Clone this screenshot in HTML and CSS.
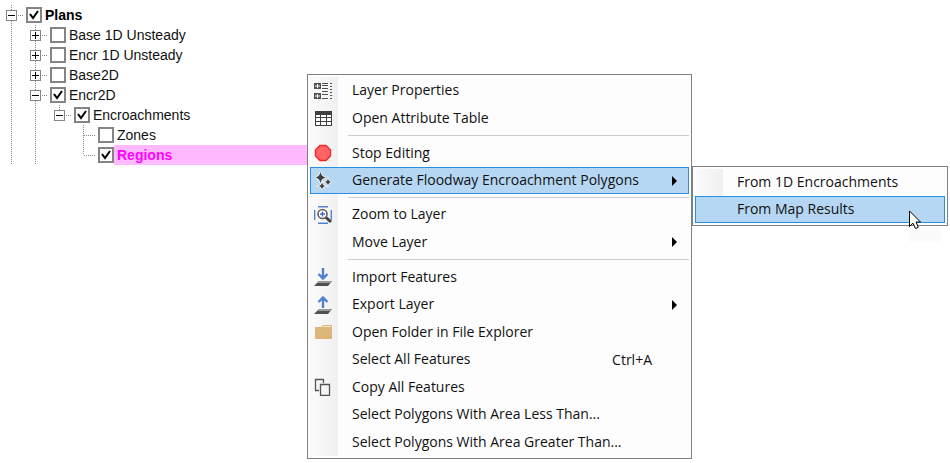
FILE: index.html
```html
<!DOCTYPE html>
<html lang="en">
<head>
    <meta charset="UTF-8">
    <meta name="viewport" content="width=device-width, initial-scale=1.0">
    <title>Plans</title>
    <link rel="stylesheet" href="styles.css">
</head>
<body>
    <!-- Layer Tree -->
    <ul class="tree">
        <li>
            <div class="row"><button class="toggle open" aria-label="Collapse"></button><label class="bold"><input type="checkbox" checked><span>Plans</span></label></div>
            <ul>
                <li><div class="row"><button class="toggle" aria-label="Expand"></button><label><input type="checkbox"><span>Base 1D Unsteady</span></label></div></li>
                <li><div class="row"><button class="toggle" aria-label="Expand"></button><label><input type="checkbox"><span>Encr 1D Unsteady</span></label></div></li>
                <li><div class="row"><button class="toggle" aria-label="Expand"></button><label><input type="checkbox"><span>Base2D</span></label></div></li>
                <li>
                    <div class="row"><button class="toggle open" aria-label="Collapse"></button><label><input type="checkbox" checked><span>Encr2D</span></label></div>
                    <ul class="single">
                        <li>
                            <div class="row"><button class="toggle open" aria-label="Collapse"></button><label><input type="checkbox" checked><span>Encroachments</span></label></div>
                            <ul class="leaves">
                                <li><div class="row leaf"><label><input type="checkbox"><span>Zones</span></label></div></li>
                                <li><div class="row leaf"><label class="bold selected"><input type="checkbox" checked><span>Regions</span></label></div></li>
                            </ul>
                        </li>
                    </ul>
                </li>
            </ul>
        </li>
    </ul>

    <!-- Context Menu -->
    <ul class="menu context">
        <li><button>
            <svg class="icon" viewBox="0 0 18 18"><path fill="#505050" d="M0 1h7v6H0zM0 11h7v6H0zM8 1h6v1H8zM8 3h6v1H8zM8 6h6v1H8zM8 9h6v1H8zM8 12h6v1H8zM8 16h6v1H8zM16 1h2v1h-2zM16 4h2v1h-2zM16 7h2v1h-2zM16 10h2v1h-2zM16 13h2v1h-2zM16 16h2v1h-2z"/><path fill="#fff" d="M3 2h1v1.500h2v1H4V6H3V4.500H1v-1h2zM3 12h1v1.500h2v1H4V16H3v-1.500H1v-1h2z"/></svg>
            <span>Layer Properties</span></button></li>
        <li><button>
            <svg class="icon" viewBox="0 0 18 18"><path fill="#404040" d="M1 2h17v15H1z"/><path fill="#fff" d="M2 6h4v2H2zM7 6h5v2H7zM13 6h4v2h-4zM2 9h4v3H2zM7 9h5v3H7zM13 9h4v3h-4zM2 13h4v3H2zM7 13h5v3H7zM13 13h4v3h-4z"/></svg>
            <span>Open Attribute Table</span></button></li>
        <li class="separator"></li>
        <li><button>
            <svg class="icon" viewBox="0 0 18 18"><path fill="#ff6464" stroke="#f02828" stroke-width="1.400" d="M6 1.500h6l4.500 4.500v6L12 16.500H6L1.500 12V6z"/></svg>
            <span>Stop Editing</span></button></li>
        <li class="active"><button>
            <svg class="icon" viewBox="0 0 18 18"><path fill="#404040" stroke="#e8edf3" stroke-width="2" paint-order="stroke" d="M6.500 0q.9 4.600 5 5.500-4.100.9-5 5.500-.9-4.600-5-5.500 4.100-.9 5-5.500zM14 7q.8 2.400 3 3-2.200.6-3 3-.8-2.400-3-3 2.200-.6 3-3zM8 11q.8 2.400 3 3-2.200.6-3 3-.8-2.400-3-3 2.200-.6 3-3z"/></svg>
            <span>Generate Floodway Encroachment Polygons</span><i class="arrow"></i></button>
            <!-- Submenu -->
            <ul class="menu submenu">
                <li><button><i class="icon"></i><span>From 1D Encroachments</span></button></li>
                <li class="active"><button><i class="icon"></i><span>From Map Results</span></button></li>
            </ul>
        </li>
        <li class="separator"></li>
        <li><button>
            <svg class="icon" viewBox="0 0 18 18"><path stroke="#5282d2" stroke-width="1.400" d="M4 .7h10M4 17.300h10M.7 4v10M17.300 4v10"/><circle cx="8.500" cy="8" r="4.500" fill="#fff" stroke="#606060" stroke-width="1.600"/><path stroke="#404040" stroke-width="3" d="M12 11.500l5 4.500"/><path stroke="#3f70c8" stroke-width="1.400" d="M8.500 5.500v5M6 8h5"/></svg>
            <span>Zoom to Layer</span></button></li>
        <li><button><i class="icon"></i><span>Move Layer</span><i class="arrow"></i></button></li>
        <li class="separator"></li>
        <li><button>
            <svg class="icon" viewBox="0 0 18 18"><path fill="#505050" d="M5 13h13l-4 5H0z"/><path fill="#999" d="M5 13h13l-1.500 2H3z"/><path fill="none" stroke="#4f7fd0" stroke-width="2.400" d="M9 0v10M4.500 6L9 10.500 13.500 6"/></svg>
            <span>Import Features</span></button></li>
        <li><button>
            <svg class="icon" viewBox="0 0 18 18"><path fill="#505050" d="M5 13h13l-4 5H0z"/><path fill="#999" d="M5 13h13l-1.500 2H3z"/><path fill="none" stroke="#4f7fd0" stroke-width="2.400" d="M9 12V2M4.500 6L9 1.500 13.500 6"/></svg>
            <span>Export Layer</span><i class="arrow"></i></button></li>
        <li><button>
            <svg class="icon" viewBox="0 0 18 18"><path fill="#dcb67a" d="M1 4h6l2-2h9v14H1z"/><path fill="#f8efdf" d="M9.500 3H17v1H8.500z"/></svg>
            <span>Open Folder in File Explorer</span></button></li>
        <li><button><i class="icon"></i><span>Select All Features</span><kbd>Ctrl+A</kbd></button></li>
        <li><button>
            <svg class="icon" viewBox="0 0 18 18"><path fill="#f6f6f6" stroke="#555" stroke-width="1.300" d="M5 12.500H1.500v-11h8V5M6.500 6.500h9v11h-9z"/></svg>
            <span>Copy All Features</span></button></li>
        <li><button><i class="icon"></i><span>Select Polygons With Area Less Than...</span></button></li>
        <li><button><i class="icon"></i><span>Select Polygons With Area Greater Than...</span></button></li>
    </ul>

    <!-- Mouse Pointer -->
    <svg class="pointer" viewBox="0 0 32 32"><path fill="#fbfbfb" d="M0 17h32v15H0z"/><path fill="#fff" stroke="#000" d="M.5 1v15.500l3.500-3.300 2.500 5.300 2.800-1.200-2.300-5.300h4.500z"/></svg>
</body>
</html>
```
FILE: styles.css
```css
body {
    margin: 0;
    min-height: 100vh;
    position: relative;
    background-color: #fff;
    color: #111;
    overflow: hidden;
}

ul {
    list-style: none;
    margin: 0;
    padding: 0;
}

button {
    border: none;
    padding: 0;
    background: none;
    color: inherit;
    font: inherit;
    text-align: left;
}

/* Tree */
.tree {
    width: 40%;
    padding: 5px 0 0 6px;
    font-family: 'Liberation Sans', Arial, sans-serif;
    font-size: 14px;
}

/* Dotted guide lines, one per level */
.tree,
.tree ul {
    background-image: repeating-linear-gradient(#888 0 1px, transparent 1px 2px);
    background-repeat: no-repeat;
    background-size: 1px 100%;
    background-position: 5px 0;
}

.tree {
    background-position: 11px 5px;
}

.tree ul {
    margin-left: 24px;
}

.tree ul.single {
    background-size: 1px 10px;
}

.tree ul.leaves {
    background-size: 1px calc(100% - 10px);
}

.row {
    display: flex;
    align-items: center;
    height: 20px;
    background: repeating-linear-gradient(90deg, #888 0 1px, transparent 1px 2px) 12px 10px / 6px 1px no-repeat;
}

.row.leaf {
    padding-left: 20px;
    background-position: 6px 10px;
    background-size: 12px 1px;
}

.toggle {
    width: 11px;
    height: 11px;
    margin-right: 9px;
    border: 1px solid #848484;
    background: linear-gradient(#000, #000) center / 7px 1px no-repeat,
        linear-gradient(#000, #000) center / 1px 7px no-repeat, #fff;
}

.toggle.open {
    background: linear-gradient(#000, #000) center / 7px 1px no-repeat, #fff;
}

.row label {
    display: flex;
    flex: 1;
    align-items: center;
    line-height: 20px;
}

.row label span {
    flex: 1;
    padding-left: 3px;
}

.row input {
    appearance: none;
    width: 16px;
    height: 16px;
    margin: 0;
    border: 2px solid #848484;
    background-color: #fff;
}

.row input:checked {
    background-image: url("data:image/svg+xml,%3Csvg xmlns='http://www.w3.org/2000/svg' viewBox='0 0 12 12'%3E%3Cpath d='M2 5l3 4 5-7' fill='none' stroke='%23000' stroke-width='2'/%3E%3C/svg%3E");
}

.bold {
    font-weight: bold;
    color: #000;
}

.selected span {
    background-color: #ffb9ff;
    color: #f0f;
}

/* Menus */
.menu {
    position: absolute;
    box-sizing: border-box;
    padding: 2px;
    border: 1px solid #808080;
    background: linear-gradient(90deg, #fcfcfc, #f0f0f0) 0 2px / 30px calc(100% - 4px) no-repeat #fdfdfd;
    font-family: 'Open Sans', 'Noto Sans', sans-serif;
    font-size: 14px;
}

.context {
    top: 74px;
    left: 307px;
    min-width: 385px;
}

.submenu {
    top: -1px;
    left: calc(100% + 3px);
    min-width: 256px;
}

.menu li {
    position: relative;
    height: 27px;
}

.context > li:nth-child(even) {
    height: 28px;
}

.context > li.separator {
    height: 1px;
    margin: 3px 0 3px 38px;
    background-color: #cdcdcd;
}

.menu button {
    display: flex;
    align-items: center;
    width: 100%;
    height: 100%;
    padding: 0 12px 0 4px;
    line-height: 18px;
    white-space: nowrap;
}

.menu .active > button {
    border: 1px solid #2a8ee0;
    padding: 0 11px 0 3px;
    background-color: #b5d7f3;
}

.menu .icon {
    width: 18px;
    height: 18px;
    margin-right: 20px;
}

.menu button span {
    flex: 1;
    padding-bottom: 1px;
}

.menu kbd {
    font: inherit;
    margin-right: 25px;
}

.arrow {
    border: 5px solid transparent;
    border-left-color: #000;
    border-right-width: 0;
}

.pointer {
    position: absolute;
    top: 210px;
    left: 909px;
    width: 32px;
    height: 32px;
}
```
